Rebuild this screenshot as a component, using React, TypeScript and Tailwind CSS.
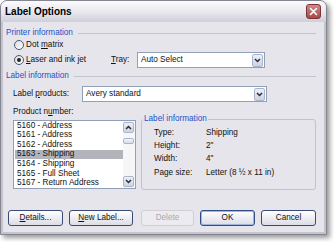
import React from "react";

const Chevron = ({ up = false }: { up?: boolean }) => (
  <svg width="7" height="5" viewBox="0 0 7 5" className={up ? "rotate-180" : ""}>
    <polyline points="1,1 3.5,3.5 6,1" fill="none" stroke="#2b2b38" strokeWidth="1.5" />
  </svg>
);

const DropButton = () => (
  <div className="w-[11px] h-[13px] flex items-center justify-center rounded-[2px] border border-[#a8b6cc] bg-gradient-to-b from-[#eef0f6] to-[#cdd3e0]">
    <Chevron />
  </div>
);

const Combo = ({ text, width }: { text: string; width: string }) => (
  <div className={`${width} h-[16px] flex items-center justify-between bg-white border border-[#8fa0b8] pl-[3px] pr-[1px]`}>
    <span>{text}</span>
    <DropButton />
  </div>
);

const Header = ({ text }: { text: string }) => (
  <div className="h-[12px] flex items-center pl-[3px] pr-[8px]">
    <span className="text-[#2152c8]">{text}</span>
    <div className="flex-1 h-px bg-[#c3c3cb] ml-[5px]" />
  </div>
);

const Radio = ({ checked = false }: { checked?: boolean }) => (
  <div className="w-[10px] h-[10px] rounded-full border border-[#4a5a70] bg-gradient-to-br from-[#dcdce4] to-white flex items-center justify-center">
    {checked && <div className="w-[4px] h-[4px] rounded-full bg-[#1e2a1e]" />}
  </div>
);

const Button = ({
  children,
  width,
  disabled = false,
  def = false,
}: {
  children: React.ReactNode;
  width: string;
  disabled?: boolean;
  def?: boolean;
}) => (
  <div
    className={`${width} h-[16px] flex items-center justify-center rounded-[3px] border ${
      disabled
        ? "border-[#cfcfd4] text-[#a8a8b0] bg-[#ececf0]"
        : def
        ? "border-[#2f4f86] shadow-[inset_0_0_0_1px_#9fb7e0] bg-gradient-to-b from-white to-[#dcdce6]"
        : "border-[#3a4a78] bg-gradient-to-b from-white to-[#dcdce6]"
    }`}
  >
    {children}
  </div>
);

const products = [
  "5160 - Address",
  "5161 - Address",
  "5162 - Address",
  "5163 - Shipping",
  "5164 - Shipping",
  "5165 - Full Sheet",
  "5167 - Return Address",
];

const info = [
  ["Type:", "Shipping"],
  ["Height:", "2\""],
  ["Width:", "4\""],
  ["Page size:", "Letter (8 ½ x 11 in)"],
];

export default function App() {
  return (
    <div className="w-[334px] h-[242px] bg-white overflow-hidden font-['Liberation_Sans',Arial,sans-serif] text-[8.2px] text-[#111]">
      <div className="w-[327px] h-[235px] flex flex-col rounded-t-[7px] border border-[#858592] bg-[#c4c4cc] shadow-[3px_3px_5px_rgba(0,0,0,0.4)] overflow-hidden">
        {/* title bar */}
        <div className="h-[21px] shrink-0 flex items-center justify-between pl-[4px] pr-[5px] bg-gradient-to-b from-[#fbfbfd] via-[#e9e9ef] to-[#cfcfda]">
          <span className="font-bold text-[10px] text-black">Label Options</span>
          <div className="w-[15px] h-[15px] rounded-[3px] border border-[#7a3434] bg-gradient-to-b from-[#cf8a8a] to-[#a44a4a] flex items-center justify-center">
            <svg width="9" height="9" viewBox="0 0 9 9">
              <path d="M1.5 1.5 L7.5 7.5 M7.5 1.5 L1.5 7.5" stroke="white" strokeWidth="1.6" strokeLinecap="round" />
            </svg>
          </div>
        </div>

        {/* body */}
        <div className="flex-1 flex flex-col mx-[2px] mb-[2px] bg-[#e6e5eb]">
          <div className="mt-[5px]">
            <Header text="Printer information" />
          </div>

          <div className="h-[12px] flex items-center pl-[11px] gap-[2px]">
            <Radio />
            <span>
              Dot <span className="underline">m</span>atrix
            </span>
          </div>

          <div className="mt-[1px] h-[16px] flex items-center pl-[11px]">
            <Radio checked />
            <span className="ml-[2px] w-[85px]">
              <span className="underline">L</span>aser and ink jet
            </span>
            <span className="w-[26px]">
              <span className="underline">T</span>ray:
            </span>
            <Combo text="Auto Select" width="w-[128px]" />
          </div>

          <div className="mt-[2px]">
            <Header text="Label information" />
          </div>

          <div className="mt-[4px] h-[16px] flex items-center pl-[10px]">
            <span className="w-[69px]">
              Label <span className="underline">p</span>roducts:
            </span>
            <Combo text="Avery standard" width="w-[185px]" />
          </div>

          <div className="mt-[4px] h-[12px] flex items-center pl-[10px]">
            Product n<span className="underline">u</span>mber:
          </div>

          <div className="mt-[1px] flex items-start pl-[10px]">
            {/* listbox */}
            <div className="mt-[1px] w-[123px] h-[69px] flex bg-white border border-[#8fa0b8]">
              <div className="flex-1 flex flex-col pl-[1px]">
                {products.map((p) => (
                  <div
                    key={p}
                    className={`h-[9.6px] flex items-center pl-[2px] ${
                      p === "5163 - Shipping" ? "bg-[#b3b3bb]" : ""
                    }`}
                  >
                    {p}
                  </div>
                ))}
              </div>
              <div className="w-[12px] flex flex-col items-center py-[1px] pr-[1px] bg-[#f6f6f8]">
                <div className="w-[11px] h-[11px] flex items-center justify-center rounded-[2px] border border-[#a8b6cc] bg-gradient-to-b from-[#eef0f6] to-[#cdd3e0]">
                  <Chevron up />
                </div>
                <div className="mt-[5px] w-[11px] h-[6px] rounded-[2px] border border-[#a8b6cc] bg-gradient-to-b from-[#f4f5f9] to-[#d6dbe6]" />
                <div className="flex-1" />
                <div className="w-[11px] h-[11px] flex items-center justify-center rounded-[2px] border border-[#a8b6cc] bg-gradient-to-b from-[#eef0f6] to-[#cdd3e0]">
                  <Chevron />
                </div>
              </div>
            </div>

            {/* group box */}
            <div className="ml-[5px] w-[175px] h-[71px] border border-[#c2c2ca] rounded-[3px] flex flex-col pt-[6px] pl-[12px]">
              <div className="-mt-[13px] -ml-[11px] mb-[1px] w-fit px-[1px] bg-[#e6e5eb] text-[#2152c8] h-[12px] flex items-center">
                Label information
              </div>
              {info.map(([k, v]) => (
                <div key={k} className="h-[13.4px] flex items-center">
                  <span className="w-[52px]">{k}</span>
                  <span>{v}</span>
                </div>
              ))}
            </div>
          </div>

          <div className="mt-[20px] flex items-center pl-[5px]">
            <Button width="w-[55px]">
              <span>
                <span className="underline">D</span>etails...
              </span>
            </Button>
            <div className="ml-[6px]">
              <Button width="w-[64px]">
                <span>
                  <span className="underline">N</span>ew Label...
                </span>
              </Button>
            </div>
            <div className="ml-[8px]">
              <Button width="w-[53px]" disabled>
                Delete
              </Button>
            </div>
            <div className="ml-[6px]">
              <Button width="w-[55px]" def>
                OK
              </Button>
            </div>
            <div className="ml-[6px]">
              <Button width="w-[55px]">Cancel</Button>
            </div>
          </div>
        </div>
      </div>
    </div>
  );
}
